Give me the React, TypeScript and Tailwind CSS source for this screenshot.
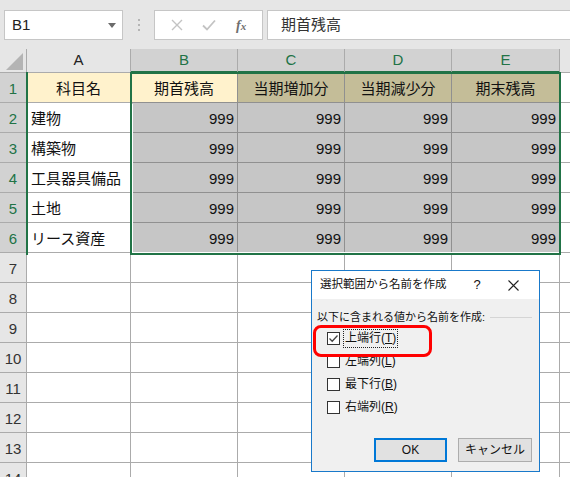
import * as React from 'react'

const JP = { fontFamily: '"Liberation Sans", "Noto Sans CJK JP", sans-serif' }

const names = ['建物', '構築物', '工具器具備品', '土地', 'リース資産']

function HeaderCell({ label, w, sel }: { label: string; w: string; sel?: boolean }) {
  return (
    <div
      className={`${w} h-full flex items-center justify-center border-r border-[#ababab] text-[15px] ${
        sel ? 'bg-[#d2d2d2] text-[#217346] border-b-2 border-b-[#217346]' : 'bg-[#e6e6e6] text-[#222] border-b border-b-[#ababab]'
      }`}
    >
      {label}
    </div>
  )
}

function RowHead({ n, sel }: { n: number; sel?: boolean }) {
  return (
    <div
      className={`w-[27px] h-full shrink-0 flex items-center justify-center pt-[3px] border-r border-b border-[#ababab] text-[15px] ${
        sel ? 'bg-[#d2d2d2] text-[#217346]' : 'bg-[#e6e6e6] text-[#333]'
      }`}
    >
      {n}
    </div>
  )
}

function Checkbox({ label, mnemonic, checked, focused }: { label: string; mnemonic: string; checked?: boolean; focused?: boolean }) {
  return (
    <div className="flex items-center h-[23px] pl-[15px]">
      <div className="w-[13px] h-[13px] border border-[#333] bg-white flex items-center justify-center">
        {checked && (
          <svg width="11" height="11" viewBox="0 0 11 11">
            <polyline points="1.5,5.5 4.2,8.2 9.5,2.5" fill="none" stroke="#444" strokeWidth="1.3" />
          </svg>
        )}
      </div>
      <div
        className={`ml-[3px] px-[1px] text-[12px] leading-[17px] text-[#111] ${
          focused ? 'border border-dotted border-[#222]' : 'border border-transparent'
        }`}
      >
        {label}(<span className="underline">{mnemonic}</span>)
      </div>
    </div>
  )
}

export default function App() {
  return (
    <div className="relative w-[570px] h-[477px] overflow-hidden bg-white select-none" style={JP}>
      {/* 数式バー */}
      <div className="h-[49px] bg-[#e6e6e6] flex items-center pl-[4px] pt-[1px]">
        <div className="w-[119px] h-[30px] bg-white border border-[#c6c6c6] flex items-center pl-[7px] pr-[6px] text-[15px] text-[#222]">
          <span className="flex-1">B1</span>
          <svg width="8" height="5" viewBox="0 0 8 5">
            <polygon points="0,0 8,0 4,5" fill="#6b6b6b" />
          </svg>
        </div>
        <div className="w-[31px] flex flex-col items-center gap-[3px]">
          <span className="w-[2px] h-[2px] bg-[#b5b5b5]" />
          <span className="w-[2px] h-[2px] bg-[#b5b5b5]" />
          <span className="w-[2px] h-[2px] bg-[#b5b5b5]" />
        </div>
        <div className="w-[109px] h-[30px] bg-white border border-[#c6c6c6] flex items-center justify-around px-[6px]">
          <svg width="12" height="12" viewBox="0 0 12 12">
            <path d="M1 1 L11 11 M11 1 L1 11" stroke="#c3c3c3" strokeWidth="1.4" />
          </svg>
          <svg width="14" height="12" viewBox="0 0 14 12">
            <polyline points="1,6.5 5,10.5 13,1.5" fill="none" stroke="#c3c3c3" strokeWidth="1.8" />
          </svg>
          <span className="text-[14px] italic font-bold text-[#6f6f6f]" style={{ fontFamily: '"Liberation Serif", serif' }}>
            f<span className="text-[11px]">x</span>
          </span>
        </div>
        <div className="ml-[4px] flex-1 h-[30px] bg-white border border-[#c6c6c6] border-r-0 flex items-center pl-[13px] text-[15px] text-[#333]">
          期首残高
        </div>
      </div>

      {/* 列見出し */}
      <div className="h-[24px] flex">
        <div className="w-[27px] h-full bg-[#e6e6e6] border-r border-b border-[#ababab] flex items-end justify-end pr-[3px] pb-[2px]">
          <svg width="17" height="17" viewBox="0 0 17 17">
            <polygon points="17,0 17,17 0,17" fill="#b4b4b4" />
          </svg>
        </div>
        <HeaderCell label="A" w="w-[104px]" />
        <HeaderCell label="B" w="w-[107px]" sel />
        <HeaderCell label="C" w="w-[107px]" sel />
        <HeaderCell label="D" w="w-[107px]" sel />
        <HeaderCell label="E" w="w-[108px]" sel />
        <div className="flex-1 h-full bg-[#e6e6e6] border-b border-[#ababab]" />
      </div>

      {/* 1行目 */}
      <div className="h-[30px] flex text-[15px] text-[#111]">
        <RowHead n={1} sel />
        <div className="w-[104px] bg-[#fff2cc] border-r border-b border-[#ababab] flex items-center justify-center pt-[3px]">科目名</div>
        <div className="w-[107px] bg-[#fff2cc] border-r border-b border-[#909090] flex items-center justify-center pt-[3px]">期首残高</div>
        <div className="w-[107px] bg-[#c4bd98] border-r border-b border-[#909090] flex items-center justify-center pt-[3px]">当期増加分</div>
        <div className="w-[107px] bg-[#c4bd98] border-r border-b border-[#909090] flex items-center justify-center pt-[3px]">当期減少分</div>
        <div className="w-[108px] bg-[#c4bd98] border-r border-b border-[#909090] flex items-center justify-center pt-[3px]">期末残高</div>
        <div className="flex-1 border-b border-[#ababab]" />
      </div>

      {/* データ行 */}
      {names.map((name, i) => (
        <div key={name} className="h-[30px] flex text-[15px] text-[#111]">
          <RowHead n={i + 2} sel />
          <div className="w-[104px] bg-white border-r border-b border-[#ababab] flex items-center pl-[4px] pt-[3px]">{name}</div>
          <div className="w-[107px] bg-[#c6c6c6] border-r border-b border-[#909090] flex items-center justify-end pr-[3px] pt-[3px]">999</div>
          <div className="w-[107px] bg-[#c6c6c6] border-r border-b border-[#909090] flex items-center justify-end pr-[3px] pt-[3px]">999</div>
          <div className="w-[107px] bg-[#c6c6c6] border-r border-b border-[#909090] flex items-center justify-end pr-[3px] pt-[3px]">999</div>
          <div className="w-[108px] bg-[#c6c6c6] border-r border-b border-[#909090] flex items-center justify-end pr-[3px] pt-[3px]">999</div>
          <div className="flex-1 border-b border-[#ababab]" />
        </div>
      ))}

      {/* 空行 */}
      {[7, 8, 9, 10, 11, 12, 13, 14].map((n) => (
        <div key={n} className="h-[30px] flex">
          <RowHead n={n} />
          <div className="w-[104px] border-r border-b border-[#ababab]" />
          <div className="w-[107px] border-r border-b border-[#ababab]" />
          <div className="w-[107px] border-r border-b border-[#ababab]" />
          <div className="w-[107px] border-r border-b border-[#ababab]" />
          <div className="w-[108px] border-r border-b border-[#ababab]" />
          <div className="flex-1 border-b border-[#ababab]" />
        </div>
      ))}

      {/* 選択範囲の枠 */}
      <div className="absolute left-[26px] top-[72px] w-[2px] h-[183px] bg-[#217346]" />
      <div className="absolute left-[130px] top-[72px] w-[2px] h-[183px] bg-[#217346]" />
      <div className="absolute left-[131px] top-[72px] w-[430px] h-[2px] bg-[#217346]" />
      <div className="absolute left-[559px] top-[72px] w-[2px] h-[183px] bg-[#217346]" />
      <div className="absolute left-[131px] top-[253px] w-[430px] h-[2px] bg-[#217346]" />
      <div className="absolute left-[132px] top-[104px] w-[1px] h-[148px] bg-white" />
      <div className="absolute left-[132px] top-[252px] w-[427px] h-[1px] bg-white" />

      {/* ダイアログ */}
      <div className="absolute left-[311px] top-[270px] w-[229px] h-[202px] border border-[#1979ca] bg-[#f0f0f0] flex flex-col">
        <div className="h-[28px] bg-white flex items-center pl-[8px] text-[11.5px] text-[#111]">
          <span className="flex-1">選択範囲から名前を作成</span>
          <span className="w-[20px] text-[13px] text-center" style={{ fontFamily: '"Liberation Sans", sans-serif' }}>?</span>
          <span className="w-[52px] flex justify-center">
            <svg width="11" height="11" viewBox="0 0 11 11">
              <path d="M0.5 0.5 L10.5 10.5 M10.5 0.5 L0.5 10.5" stroke="#222" strokeWidth="1.1" />
            </svg>
          </span>
        </div>
        <div className="flex items-center pl-[5px] pr-[7px] mt-[9px] h-[18px]">
          <span className="text-[11px] text-[#111]">以下に含まれる値から名前を作成:</span>
          <span className="flex-1 ml-[5px] h-[1px] bg-[#d5d5d5]" />
        </div>
        <div className="mt-[1px] flex flex-col">
          <Checkbox label="上端行" mnemonic="T" checked focused />
          <Checkbox label="左端列" mnemonic="L" />
          <Checkbox label="最下行" mnemonic="B" />
          <Checkbox label="右端列" mnemonic="R" />
        </div>
        <div className="mt-auto mb-[9px] flex justify-end gap-[11px] pr-[7px] text-[12px] text-[#111]">
          <button className="w-[73px] h-[24px] bg-[#e1e1e1] border-2 border-[#0078d7] flex items-center justify-center">OK</button>
          <button className="w-[74px] h-[24px] bg-[#e1e1e1] border border-[#adadad] flex items-center justify-center">キャンセル</button>
        </div>
      </div>

      {/* 強調枠 */}
      <div className="absolute left-[313px] top-[325px] w-[119px] h-[32px] border-[3px] border-[#ff0000] rounded-[8px]" />
    </div>
  )
}
